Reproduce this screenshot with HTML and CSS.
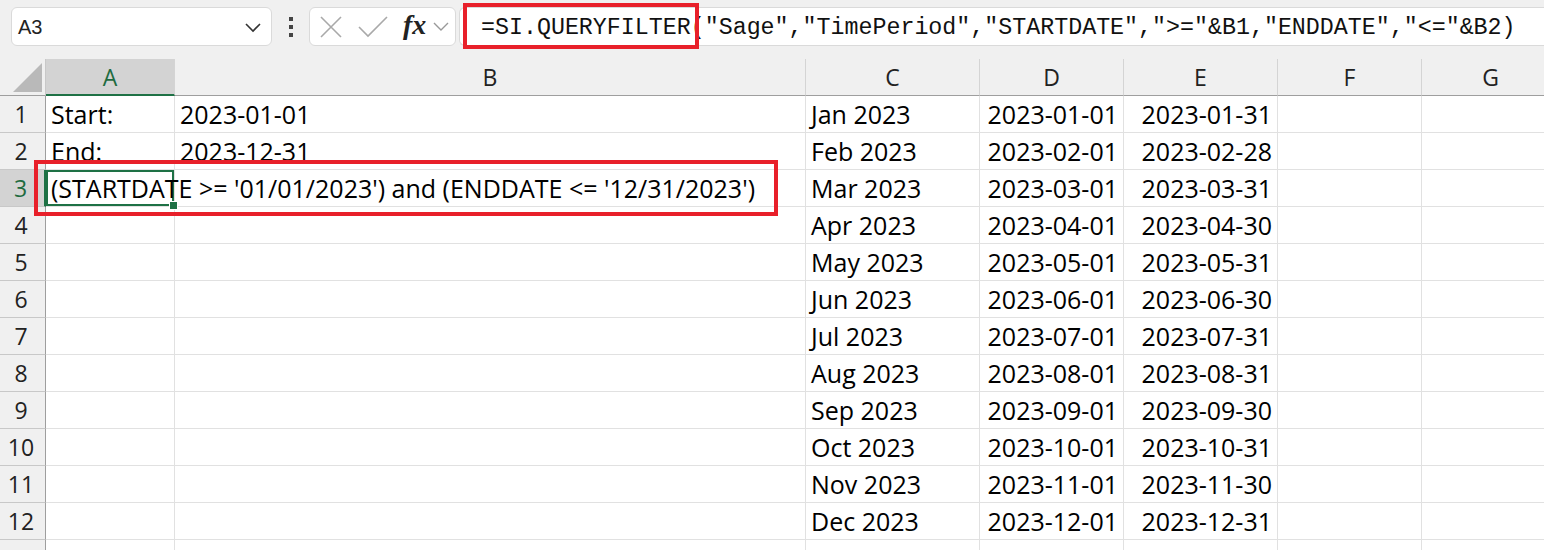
FILE: index.html
```html
<!DOCTYPE html>
<html lang="en">
<head>
  <meta charset="UTF-8">
  <title>Sheet - QueryFilter</title>
  <link rel="stylesheet" href="styles.css">
</head>
<body>
  <div class="toolbar">
    <div class="name-box">
      <span>A3</span>
      <svg class="chev" width="16" height="10" viewBox="0 0 16 10"><polyline points="1,1 8,8 15,1" fill="none" stroke="#333" stroke-width="1.6"/></svg>
    </div>
    <div class="dots"><i></i><i></i><i></i></div>
    <div class="fx-box">
      <svg width="22" height="22" viewBox="0 0 22 22"><path d="M1 1L21 21M21 1L1 21" stroke="#a9a9a9" stroke-width="1.6" fill="none"/></svg>
      <svg width="30" height="22" viewBox="0 0 30 22"><polyline points="1,11 10,20 29,1" stroke="#a9a9a9" stroke-width="1.6" fill="none"/></svg>
      <span class="fx">fx</span>
      <svg width="16" height="10" viewBox="0 0 16 10"><polyline points="1,1 8,8 15,1" fill="none" stroke="#999" stroke-width="1.4"/></svg>
    </div>
    <div class="formula">=SI.QUERYFILTER("Sage","TimePeriod","STARTDATE","&gt;="&amp;B1,"ENDDATE","&lt;="&amp;B2)</div>
    <div class="mark mark-formula"></div>
  </div>

  <div class="sheet">
    <div class="corner"><span></span></div>
    <div class="col-head active">A</div>
    <div class="col-head">B</div>
    <div class="col-head">C</div>
    <div class="col-head">D</div>
    <div class="col-head">E</div>
    <div class="col-head">F</div>
    <div class="col-head">G</div>
  </div>
  <div class="sheet" id="rows"></div>
  <div class="mark mark-row"></div>

  <script src="app.js"></script>
</body>
</html>
```

FILE: app.js
```js
const months = ['Jan', 'Feb', 'Mar', 'Apr', 'May', 'Jun', 'Jul', 'Aug', 'Sep', 'Oct', 'Nov', 'Dec'];
const lastDay = [31, 28, 31, 30, 31, 30, 31, 31, 30, 31, 30, 31];
const pad = n => String(n).padStart(2, '0');

const rows = document.getElementById('rows');
let html = '';

// row 13 only peeks in at the bottom edge, so it stays blank
for (let r = 1; r <= 13; r++) {
  const m = r - 1;
  const cells = ['', '', '', '', '', '', ''];
  if (r === 1) { cells[0] = 'Start:'; cells[1] = '2023-01-01'; }
  if (r === 2) { cells[0] = 'End:'; cells[1] = '2023-12-31'; }
  if (r === 3) cells[0] = "(STARTDATE &gt;= '01/01/2023') and (ENDDATE &lt;= '12/31/2023')";
  if (r <= 12) {
    cells[2] = `${months[m]} 2023`;
    cells[3] = `2023-${pad(r)}-01`;
    cells[4] = `2023-${pad(r)}-${lastDay[m]}`;
  }

  html += `<div class="row-head${r === 3 ? ' active' : ''}">${r <= 12 ? r : ''}</div>`;
  cells.forEach((text, i) => {
    let cls = 'cell';
    if (i === 3 || i === 4) cls += ' num';
    if (r === 3 && i === 0) cls += ' selected';
    html += `<div class="${cls}">${text}</div>`;
  });
}

rows.innerHTML = html;
```

FILE: styles.css
```css
body {
  margin: 0;
  width: 1544px;
  height: 550px;
  overflow: hidden;
  background-color: #f0f0f0;
  font-family: 'Open Sans', 'Liberation Sans', sans-serif;
  color: #000;
  position: relative;
}
.toolbar {
  display: flex;
  align-items: center;
  height: 59px;
  padding-left: 11px;
  box-sizing: border-box;
  padding-bottom: 6px;
  position: relative;
}
.name-box {
  width: 261px;
  height: 39px;
  box-sizing: border-box;
  background-color: #fff;
  border: 1px solid #dadada;
  border-radius: 6px;
  display: flex;
  align-items: center;
  justify-content: space-between;
  padding: 2px 10px 0 6px;
  font-family: 'Liberation Sans', sans-serif;
  font-size: 20px;
  color: #222;
}
.dots {
  width: 37px;
  display: flex;
  flex-direction: column;
  align-items: center;
  gap: 4px;
}
.dots i {
  width: 4px;
  height: 4px;
  background-color: #444;
  display: block;
}
.fx-box {
  width: 147px;
  height: 39px;
  box-sizing: border-box;
  background-color: #fff;
  border: 1px solid #dadada;
  border-radius: 6px;
  display: flex;
  align-items: center;
  padding: 0 4px 0 10px;
}
.fx-box svg:nth-child(2) {
  margin-left: 16px;
}
.fx {
  font-family: 'Liberation Serif', serif;
  font-style: italic;
  font-weight: bold;
  font-size: 28px;
  color: #222;
  margin-left: 15px;
  margin-right: 7px;
  line-height: 1;
  padding-bottom: 4px;
}
.formula {
  flex: 1;
  height: 39px;
  margin-left: 3px;
  box-sizing: border-box;
  background-color: #fff;
  border: 1px solid #dadada;
  border-right: none;
  border-radius: 6px 0 0 6px;
  padding: 3px 0 0 21px;
  font-family: 'Liberation Mono', 'DejaVu Sans Mono', monospace;
  font-size: 23.3px;
  line-height: 34px;
  white-space: nowrap;
  color: #111;
}
.mark {
  position: absolute;
  border: 4px solid #e8202a;
  box-sizing: border-box;
  pointer-events: none;
}
.mark-formula {
  left: 463px;
  top: 3px;
  width: 236px;
  height: 46px;
}
.mark-row {
  left: 34px;
  top: 160px;
  width: 744px;
  height: 56px;
}

.sheet {
  display: grid;
  grid-template-columns: 46px 129px 631px 174px 144px 154px 144px 138px;
  grid-auto-rows: 37px;
  background-color: #fff;
}
.corner {
  background-color: #f0f0f0;
  border-right: 1px solid #c8c8c8;
  border-bottom: 1px solid #9e9e9e;
  position: relative;
}
.corner span {
  position: absolute;
  right: 3px;
  bottom: 3px;
  width: 0;
  height: 0;
  border-left: 29px solid transparent;
  border-bottom: 29px solid #b9b9b9;
}
.col-head {
  background-color: #f0f0f0;
  border-right: 1px solid #d4d4d4;
  border-bottom: 1px solid #9e9e9e;
  display: flex;
  align-items: center;
  justify-content: center;
  font-size: 23px;
  color: #222;
}
.col-head.active {
  background-color: #d3d3d3;
  color: #1e6b40;
  border-bottom: 2px solid #1e7145;
}
.row-head {
  background-color: #f0f0f0;
  border-right: 1px solid #9e9e9e;
  border-bottom: 1px solid #c8c8c8;
  display: flex;
  align-items: center;
  justify-content: center;
  font-size: 23px;
  color: #222;
  padding-right: 3px;
}
.row-head.active {
  background-color: #d3d3d3;
  color: #1e6b40;
  border-right: 2px solid #1e7145;
}
.cell {
  border-right: 1px solid #e1e1e1;
  border-bottom: 1px solid #e1e1e1;
  display: flex;
  align-items: center;
  padding: 0 5px;
  font-size: 25px;
  white-space: nowrap;
  position: relative;
  box-sizing: border-box;
}
.cell.num {
  justify-content: flex-end;
}
.cell.selected {
  box-shadow: inset 0 0 0 2px #1e7145;
  z-index: 1;
}
.cell.selected::after {
  content: '';
  position: absolute;
  right: -4px;
  bottom: -4px;
  width: 7px;
  height: 7px;
  background-color: #1e7145;
  border: 1px solid #fff;
}
```
